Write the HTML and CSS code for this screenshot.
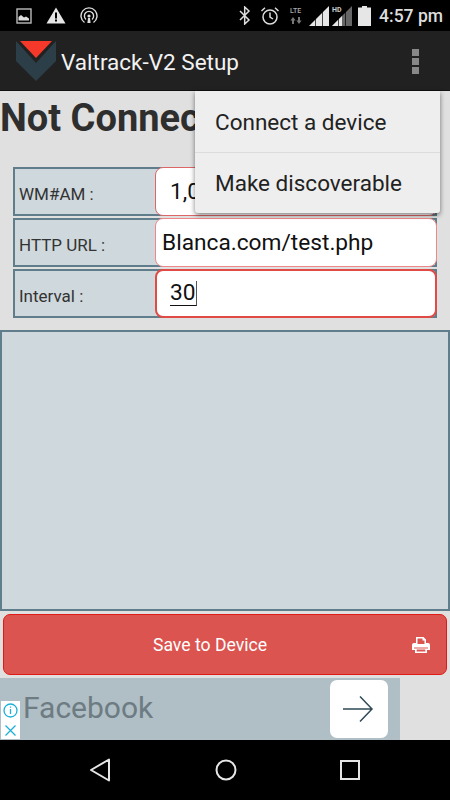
FILE: index.html
```html
<!DOCTYPE html>
<html>
<head>
    <title>Valtrack-V2 Setup</title>
    <link rel="stylesheet" href="styles.css">
</head>
<body>
    <div class="screen">
        <!-- Android status bar -->
        <div class="status-bar">
            <div class="status-left">
                <svg width="16" height="16" viewBox="0 0 16 16"><rect x="1" y="1" width="14" height="14" fill="none" stroke="#bbb" stroke-width="1.4"/><path d="M2.5 12.5V9l2.5-2 3 2.5 2-1 3 2v2z" fill="#ddd"/></svg>
                <svg width="20" height="17" viewBox="0 0 20 17"><path d="M10 0.5L19.5 16.5H0.5z" fill="#e6e6e6"/><rect x="9" y="5.5" width="2" height="6" fill="#000"/><rect x="9" y="12.5" width="2" height="2" fill="#000"/></svg>
                <svg width="18" height="18" viewBox="0 0 18 18" fill="none" stroke="#ddd" stroke-width="1.4"><path d="M4.5 15.5A8 8 0 1 1 13.5 15.5"/><path d="M6 12.5A4.6 4.6 0 1 1 12 12.5"/><circle cx="9" cy="9" r="1.6" fill="#ddd" stroke="none"/><path d="M8 11h2l.6 5H7.4z" fill="#ddd" stroke="none"/></svg>
            </div>
            <div class="status-right">
                <svg width="12" height="19" viewBox="0 0 12 19" fill="none" stroke="#ddd" stroke-width="1.5"><path d="M1 5l9 9-4.3 4V1L10 5 1 14"/></svg>
                <svg width="20" height="20" viewBox="0 0 20 20" fill="none" stroke="#ddd" stroke-width="1.5"><circle cx="10" cy="11" r="7"/><path d="M10 6.5V11l3 2"/><path d="M1.5 5L5 1.8M18.5 5L15 1.8"/></svg>
                <div class="lte">
                    <span>LTE</span>
                    <svg width="12" height="7" viewBox="0 0 12 7" fill="#777"><path d="M3 0l2.6 3.5H4V7H2V3.5H.4zM9 7L6.4 3.5H8V0h2v3.5h1.6z"/></svg>
                </div>
                <svg width="20" height="20" viewBox="0 0 20 20"><path d="M0 20L20 0v20z" fill="#e6e6e6"/><path d="M6.500 20v-20M13.500 20v-20" stroke="#000" stroke-width="0.700"/></svg>
                <div class="signal-hd">
                    <span>HD</span>
                    <svg width="20" height="20" viewBox="0 0 20 20"><path d="M0 20L20 0v20z" fill="#666"/><path d="M0 20L10 10v10z" fill="#e6e6e6"/><path d="M6.500 20v-20M13.500 20v-20" stroke="#000" stroke-width="0.700"/></svg>
                </div>
                <svg class="battery" width="13" height="20" viewBox="0 0 13 20"><path d="M4 0h5v1.500h4V20H0V1.500h4z" fill="#e6e6e6"/></svg>
                <span class="clock">4:57 pm</span>
            </div>
        </div>

        <!-- Action bar -->
        <div class="action-bar">
            <svg class="logo" width="40" height="40" viewBox="0 0 40 40">
                <path d="M0 0L20 22L40 0V20L20 40L0 20z" fill="#2c3e48"/>
                <path d="M4 0H36L20 17z" fill="#f4392a"/>
            </svg>
            <span class="app-title">Valtrack-V2 Setup</span>
            <div class="overflow">
                <i></i><i></i><i></i>
            </div>
        </div>

        <div class="content">
            <h1 class="conn-title">Not Connected</h1>

            <div class="form">
                <div class="row">
                    <div class="label">WM#AM :</div>
                    <div class="field field-soft field-first">1,000</div>
                </div>
                <div class="row">
                    <div class="label">HTTP URL :</div>
                    <div class="field field-soft">Blanca.com/test.php</div>
                </div>
                <div class="row">
                    <div class="label">Interval :</div>
                    <div class="field field-focus"><span class="typed">30</span></div>
                </div>
            </div>

            <div class="log-box"></div>

            <div class="save-btn">
                <span>Save to Device</span>
                <svg class="print-icon" width="18" height="16" viewBox="0 0 18 16">
                    <path d="M4 0h7.500L14 2.500V6h2a2 2 0 0 1 2 2v5h-3v3H3v-3H0V8a2 2 0 0 1 2-2h2zM5.500 1.500V7h7V3.500h-2v-2zM2 10.500v1h14v-1zM4.700 12.500v2h8.600v-2z" fill="#fff" fill-rule="evenodd"/>
                </svg>
            </div>

            <div class="ad-row">
                <div class="ad">
                    <div class="ad-badge">
                        <svg width="19" height="38" viewBox="0 0 19 38" fill="none" stroke="#1cb0d8" stroke-width="1.300">
                            <circle cx="9.500" cy="9.500" r="6.500"/>
                            <path d="M9.500 8v5M9.500 5.500v1.300"/>
                            <path d="M4.500 24.500l10 10M14.500 24.500l-10 10"/>
                        </svg>
                    </div>
                    <span class="ad-text">Facebook</span>
                    <div class="ad-arrow">
                        <svg width="32" height="28" viewBox="0 0 32 28" fill="none" stroke="#2f4a57" stroke-width="1.500"><path d="M1 14H30M18 1.500L30 14L18 26.500"/></svg>
                    </div>
                </div>
            </div>
        </div>

        <!-- Android navigation bar -->
        <div class="nav-bar">
            <svg width="22" height="24" viewBox="0 0 22 24" fill="none" stroke="#e6e6e6" stroke-width="2"><path d="M20 1.500V22.500L2 12z" stroke-linejoin="round"/></svg>
            <svg width="22" height="22" viewBox="0 0 22 22" fill="none" stroke="#e6e6e6" stroke-width="2"><circle cx="11" cy="11" r="9.500"/></svg>
            <svg width="20" height="20" viewBox="0 0 20 20" fill="none" stroke="#e6e6e6" stroke-width="2"><rect x="1" y="1" width="18" height="18"/></svg>
        </div>

        <!-- Overflow menu, open over the form -->
        <div class="menu">
            <div class="menu-item">Connect a device</div>
            <div class="menu-item">Make discoverable</div>
        </div>
    </div>
</body>
</html>
```
FILE: styles.css
```css
* {
    box-sizing: border-box;
}

body {
    margin: 0;
    padding: 0;
    font-family: Roboto, sans-serif;
    background-color: #e0e0e0;
}

.screen {
    position: relative;
    width: 450px;
    height: 800px;
    display: flex;
    flex-direction: column;
    overflow: hidden;
}

/* Status bar */
.status-bar {
    height: 31px;
    background-color: #000;
    display: flex;
    justify-content: space-between;
    align-items: center;
    padding: 0 7px 0 16px;
}

.status-left {
    display: flex;
    align-items: center;
    gap: 14px;
}

.status-right {
    display: flex;
    align-items: center;
}

.status-right > svg:first-child {
    margin-right: 9px;
}

.lte {
    width: 17px;
    margin-left: 7px;
    margin-right: 5px;
    display: flex;
    flex-direction: column;
    align-items: center;
    gap: 2px;
}

.lte span {
    font-size: 7px;
    line-height: 8px;
    font-weight: 500;
    color: #aaa;
}

.signal-hd {
    position: relative;
    margin-left: 3px;
    margin-right: 6px;
    height: 20px;
}

.signal-hd span {
    position: absolute;
    left: 0;
    top: 0;
    font-size: 7px;
    line-height: 8px;
    font-weight: 700;
    color: #ccc;
    background-color: #000;
}

.battery {
    margin-right: 8px;
}

.clock {
    font-size: 17.500px;
    font-weight: 500;
    color: #ddd;
}

/* Action bar */
.action-bar {
    height: 60px;
    background-color: #212121;
    display: flex;
    align-items: center;
    padding: 10px 0 0 16px;
    border-bottom: 1px solid #111;
}

.logo {
    margin-right: 5px;
    margin-bottom: 9px;
}

.app-title {
    font-size: 22.500px;
    color: #f2f2f2;
    margin-bottom: 7px;
}

.overflow {
    margin-left: auto;
    margin-right: 31px;
    margin-bottom: 9px;
    display: flex;
    flex-direction: column;
    gap: 2px;
}

.overflow i {
    display: block;
    width: 7px;
    height: 7px;
    background-color: #888;
}

/* Main area */
.content {
    flex: 1;
    display: flex;
    flex-direction: column;
    background-color: #e0e0e0;
}

.conn-title {
    margin: 0;
    height: 76px;
    font-size: 38px;
    line-height: 55px;
    font-weight: 700;
    color: #2e2e2e;
    white-space: nowrap;
}

.form {
    margin: 0 13px;
    display: flex;
    flex-direction: column;
    gap: 2px;
}

.row {
    height: 49px;
    display: flex;
    background-color: #cfd8dc;
    border: 2px solid #607d8b;
}

.label {
    width: 140px;
    display: flex;
    align-items: center;
    padding: 4px 0 0 4px;
    font-size: 17px;
    color: #333;
}

.field {
    flex: 1;
    margin: -2px -2px -2px 0;
    display: flex;
    align-items: center;
    padding-left: 6px;
    font-size: 22.700px;
    color: #111;
    background-color: #fff;
    border-radius: 8px;
}

.field-soft {
    border: 1px solid #e88;
}

.field-first {
    padding-left: 14px;
    border-color: #d66;
}

.field-focus {
    border: 2px solid #e04b45;
    padding-left: 13px;
}

.typed {
    border-bottom: 1px solid #111;
    border-right: 1px solid #555;
    line-height: 24px;
}

.log-box {
    height: 281px;
    margin-top: 12px;
    background-color: #cfd8dc;
    border: 2px solid #607d8b;
}

.save-btn {
    height: 61px;
    margin: 3px 3px 0;
    padding-right: 30px;
    display: flex;
    align-items: center;
    justify-content: center;
    position: relative;
    background-color: #db5450;
    border: 1px solid #e01a14;
    border-radius: 7px;
    font-size: 17.600px;
    color: #fff;
}

.print-icon {
    position: absolute;
    right: 16px;
    top: 22px;
}

.ad-row {
    flex: 1;
    margin-top: 3px;
}

.ad {
    position: relative;
    width: 400px;
    height: 62px;
    display: flex;
    align-items: center;
    background-color: #b0bec5;
}

.ad-badge {
    position: absolute;
    left: 1px;
    bottom: 1px;
    width: 19px;
    height: 38px;
    background-color: #fff;
}

.ad-badge svg {
    display: block;
}

.ad-text {
    margin-left: 23px;
    margin-bottom: 3px;
    font-size: 30px;
    color: #6d7b82;
}

.ad-arrow {
    position: absolute;
    left: 330px;
    top: 2px;
    width: 58px;
    height: 58px;
    display: flex;
    align-items: center;
    justify-content: center;
    padding-right: 2px;
    background-color: #fff;
    border-radius: 7px;
}

/* Navigation bar */
.nav-bar {
    height: 60px;
    background-color: #000;
    display: flex;
    align-items: center;
    padding: 0 90px 0 89px;
    justify-content: space-between;
}

/* Overflow menu */
.menu {
    position: absolute;
    left: 195px;
    top: 91px;
    width: 245px;
    height: 122px;
    background-color: #eeeeee;
    border-radius: 0 0 3px 3px;
    box-shadow: 0 2px 5px rgba(0, 0, 0, 0.5);
}

.menu-item {
    height: 61px;
    display: flex;
    align-items: center;
    padding-left: 20px;
    font-size: 22.500px;
    color: #222;
}

.menu-item + .menu-item {
    border-top: 1px solid #dcdcdc;
}
```
